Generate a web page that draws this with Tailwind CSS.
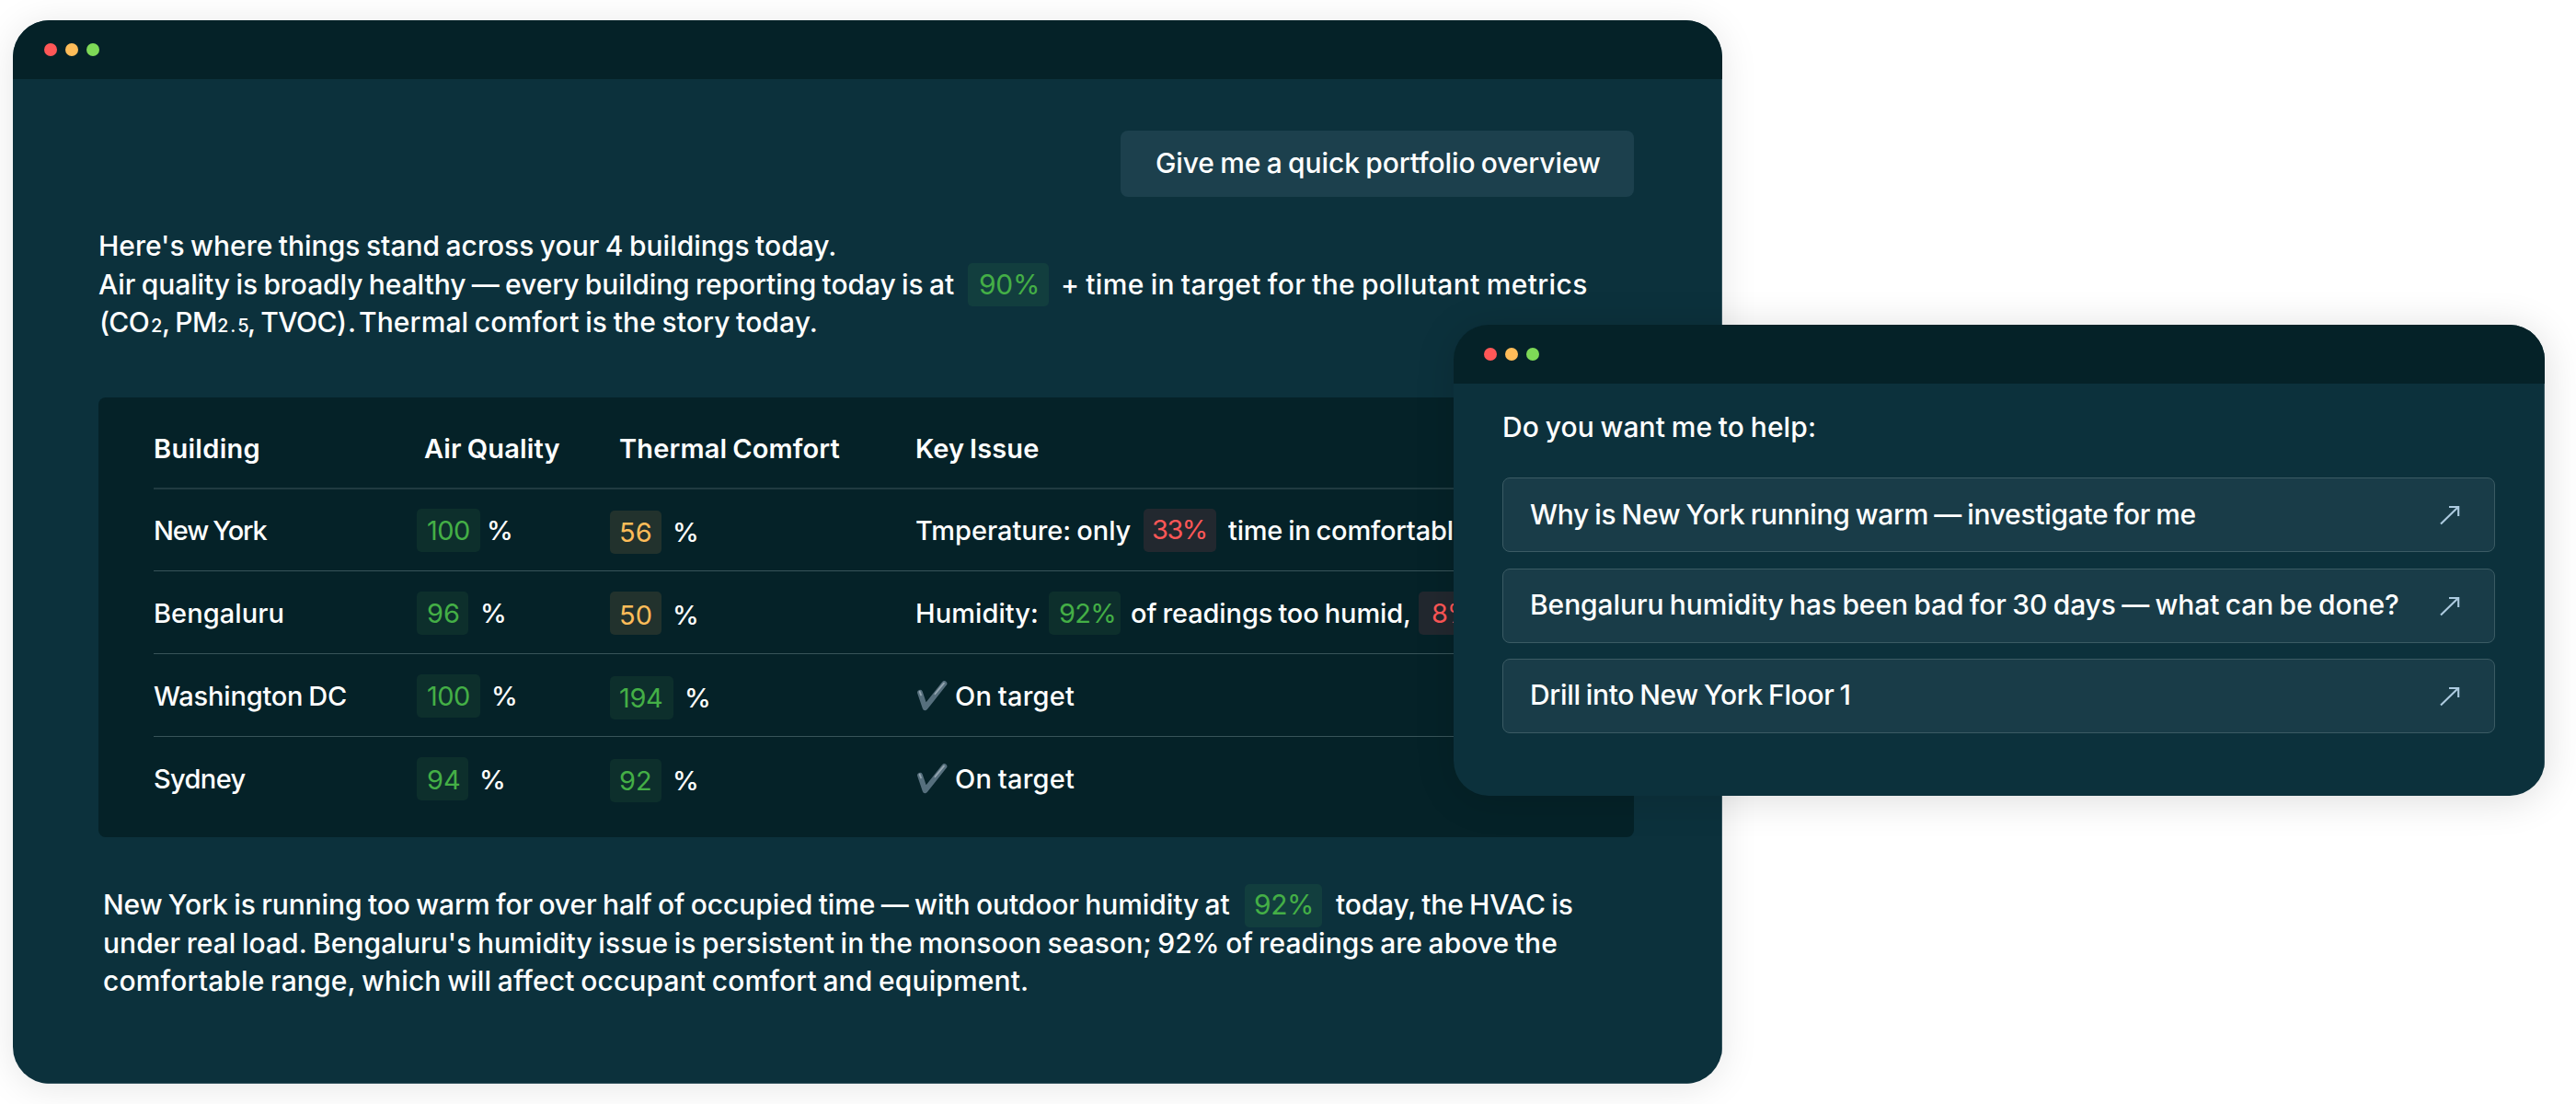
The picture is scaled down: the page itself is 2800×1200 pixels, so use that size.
<!DOCTYPE html>
<html lang="en">
<head>
  <meta charset="UTF-8">
  <title>Portfolio overview</title>
  <script src="https://cdn.jsdelivr.net/npm/@tailwindcss/browser@4"></script>
</head>
<body class="relative w-[2800px] h-[1200px] overflow-hidden bg-white font-['Inter',sans-serif] font-medium text-[30px] text-white whitespace-nowrap [word-spacing:-1.5px]">

  <!-- Chat window -->
  <main class="absolute left-[14px] top-[22px] w-[1858px] h-[1156px] rounded-[40px] overflow-hidden bg-[#0c313c] shadow-[0_4px_40px_rgba(0,0,0,0.1)] flex flex-col">
    <header class="h-16 shrink-0 bg-[#052228] flex items-center gap-[9px] pl-[34px]">
      <span class="size-3.5 rounded-full bg-[#ff5757]"></span>
      <span class="size-3.5 rounded-full bg-[#ffbd59]"></span>
      <span class="size-3.5 rounded-full bg-[#7ed957]"></span>
    </header>

    <div class="flex-1 flex flex-col border-b border-r border-[#35545e]">
      <div class="self-end mt-14 mr-[95px] w-[558px] h-[72px] rounded-lg bg-[#1c404d] flex items-center pl-[38px] pb-[2px] tracking-[-0.1px]">Give me a quick portfolio overview</div>

      <section class="mt-8 pl-[92px]">
        <p class="h-[42px] flex items-center pl-[1px]">Here's where things stand across your 4 buildings today.</p>
        <p class="h-[42px] flex items-center pl-[1px]">
          <span class="w-[945px] tracking-[-0.08px]">Air quality is broadly healthy — every building reporting today is at</span>
          <span class="w-[88px] h-[47px] rounded-[5px] bg-[#123e3e] font-normal text-[#44af46] flex items-center pl-[12px] tracking-[-0.26px]">90%</span>
          <span class="ml-[13px] tracking-[0.37px]">+ time in target for the pollutant metrics</span>
        </p>
        <p class="h-[41px] flex items-baseline pl-[2px] leading-[41px]">
          <span class="w-[56px] tracking-[-0.7px]">(CO</span>
          <span class="w-[12px] text-[20px]">2</span>
          <span class="w-[60px] tracking-[-0.5px] whitespace-pre">, PM</span>
          <span class="w-[33px] text-[20px] tracking-[2px]">2.5</span>
          <span class="w-[109px] tracking-[-0.5px] whitespace-pre">, TVOC)</span>
          <span class="w-[12px]">.</span>
          <span class="tracking-[0.1px]">Thermal comfort is the story today.</span>
        </p>
      </section>

      <!-- Building table -->
      <section class="mt-[61px] ml-[93px] w-[1669px] h-[478px] rounded-lg bg-[#052228] px-[60px] text-[29px]">
        <div class="grid grid-cols-[286px_210px_332px_1fr] items-center h-[100px] pt-[13px] border-b-2 border-[#203b41] font-semibold">
          <span class="tracking-[0.3px]">Building</span>
          <span class="pl-[8px] tracking-[0.15px]">Air Quality</span>
          <span class="pl-[10px] tracking-[0.15px]">Thermal Comfort</span>
          <span class="tracking-[0.1px]">Key Issue</span>
        </div>

        <div class="grid grid-cols-[286px_210px_332px_1fr] items-center h-[89px] border-b border-[#385459]">
          <span class="pt-[1px] tracking-[-1.15px]">New York</span>
          <span class="flex items-center">
            <span class="w-[69px] h-[47px] rounded-[5px] bg-[#0d2f2c] font-normal text-[#44af46] flex items-center pl-[11px] pt-[1px] tracking-[-0.5px]">100</span>
            <span class="ml-[7px] pt-[1px]">%</span>
          </span>
          <span class="flex items-center pt-[5px]">
            <span class="w-[56px] h-[47px] rounded-[5px] bg-[#22322d] font-normal text-[#ffbd59] flex items-center pl-[10px]">56</span>
            <span class="ml-[12px]">%</span>
          </span>
          <span class="flex items-center">
            <span class="w-[248px] pt-[1px] tracking-[-0.03px]">Tmperature: only</span>
            <span class="w-[79px] h-[47px] rounded-[5px] bg-[#22282f] font-normal text-[#ff5757] flex items-center pl-[9px] tracking-[-1.5px]">33%</span>
            <span class="ml-[13px] pt-[1px] tracking-[-0.2px]">time in comfortable range</span>
          </span>
        </div>

        <div class="grid grid-cols-[286px_210px_332px_1fr] items-center h-[90px] pt-[2px] border-b border-[#385459]">
          <span class="tracking-[0.06px]">Bengaluru</span>
          <span class="flex items-center">
            <span class="w-[56px] h-[47px] rounded-[5px] bg-[#0d2f2c] font-normal text-[#44af46] flex items-center pl-[11px]">96</span>
            <span class="ml-[13px]">%</span>
          </span>
          <span class="flex items-center">
            <span class="w-[56px] h-[47px] rounded-[5px] bg-[#22322d] font-normal text-[#ffbd59] flex items-center pl-[10px] pt-[4px]">50</span>
            <span class="ml-[12px] pt-[4px]">%</span>
          </span>
          <span class="flex items-center">
            <span class="w-[145px] tracking-[0.08px]">Humidity:</span>
            <span class="w-[78px] h-[47px] rounded-[5px] bg-[#0d2f2c] font-normal text-[#44af46] flex items-center pl-[11px] tracking-[-0.7px]">92%</span>
            <span class="ml-[11px] w-[313px] tracking-[-0.11px]">of readings too humid,</span>
            <span class="w-[79px] h-[47px] rounded-[5px] bg-[#22282f] font-normal text-[#ff5757] flex items-center pl-[14px] tracking-[-1px]">8%</span>
          </span>
        </div>

        <div class="grid grid-cols-[286px_210px_332px_1fr] items-center h-[90px] pt-[2px] border-b border-[#385459]">
          <span class="tracking-[-0.2px]">Washington DC</span>
          <span class="flex items-center">
            <span class="w-[69px] h-[47px] rounded-[5px] bg-[#0d2f2c] font-normal text-[#44af46] flex items-center pl-[11px] tracking-[-0.5px]">100</span>
            <span class="ml-[12px]">%</span>
          </span>
          <span class="flex items-center pt-[4px]">
            <span class="w-[69px] h-[47px] rounded-[5px] bg-[#0d2f2c] font-normal text-[#44af46] flex items-center pl-[10px] tracking-[-0.4px]">194</span>
            <span class="ml-[12px]">%</span>
          </span>
          <span class="flex items-center pl-[2px]">
            <svg class="w-[33px] h-[33px] mr-[8px]" viewBox="0 0 33 33" fill="none" stroke-linecap="round" stroke-linejoin="round">
              <path d="M3 12.8 8.6 29.3 29.4 3" stroke="#566f7d" stroke-width="5.8"/>
              <path d="M2.6 11.8 4 15.4M19.4 14.2 29 2.6" stroke="#94a5b0" stroke-width="1.8"/>
            </svg>
            <span class="tracking-[0.25px]">On target</span>
          </span>
        </div>

        <div class="grid grid-cols-[286px_210px_332px_1fr] items-center h-[90px]">
          <span class="pt-[1px] tracking-[-0.64px]">Sydney</span>
          <span class="flex items-center">
            <span class="w-[56px] h-[47px] rounded-[5px] bg-[#0d2f2c] font-normal text-[#44af46] flex items-center pl-[11px] pt-[4px]">94</span>
            <span class="ml-[12px] pt-[4px]">%</span>
          </span>
          <span class="flex items-center pt-[5px]">
            <span class="w-[56px] h-[47px] rounded-[5px] bg-[#0d2f2c] font-normal text-[#44af46] flex items-center pl-[10px]">92</span>
            <span class="ml-[12px]">%</span>
          </span>
          <span class="flex items-center pl-[2px] pt-[1px]">
            <svg class="w-[33px] h-[33px] mr-[8px]" viewBox="0 0 33 33" fill="none" stroke-linecap="round" stroke-linejoin="round">
              <path d="M3 12.8 8.6 29.3 29.4 3" stroke="#566f7d" stroke-width="5.8"/>
              <path d="M2.6 11.8 4 15.4M19.4 14.2 29 2.6" stroke="#94a5b0" stroke-width="1.8"/>
            </svg>
            <span class="tracking-[0.25px]">On target</span>
          </span>
        </div>
      </section>

      <section class="mt-[52px] pl-[98px]">
        <p class="h-[42px] flex items-center">
          <span class="w-[1241px] tracking-[-0.08px]">New York is running too warm for over half of occupied time — with outdoor humidity at</span>
          <span class="w-[84px] h-[47px] mt-[3px] pb-[3px] rounded-[5px] bg-[#123e3e] font-normal text-[#44af46] flex items-center pl-[10px] tracking-[-0.4px]">92%</span>
          <span class="ml-[15px] tracking-[-0.17px]">today, the HVAC is</span>
        </p>
        <p class="h-[42px] flex items-center tracking-[0.05px]">under real load. Bengaluru's humidity issue is persistent in the monsoon season; 92% of readings are above the</p>
        <p class="h-[41px] flex items-center tracking-[0.13px]">comfortable range, which will affect occupant comfort and equipment.</p>
      </section>
    </div>
  </main>

  <!-- Follow-up suggestions window -->
  <aside class="absolute left-[1580px] top-[353px] w-[1186px] h-[512px] rounded-[38px] overflow-hidden bg-[#0c313c] shadow-[0_4px_44px_rgba(0,0,0,0.14)] flex flex-col">
    <header class="h-16 shrink-0 bg-[#052228] flex items-center gap-[9px] pl-[33px]">
      <span class="size-3.5 rounded-full bg-[#ff5757]"></span>
      <span class="size-3.5 rounded-full bg-[#ffbd59]"></span>
      <span class="size-3.5 rounded-full bg-[#7ed957]"></span>
    </header>

    <div class="flex-1 border-r border-[#35545e] pt-[29px] pl-[53px] pr-[53px]">
      <p class="h-9 leading-9 tracking-[0.12px]">Do you want me to help:</p>

      <div class="mt-[37px] h-[81px] rounded-lg border border-[#3b5b64] bg-[#193c48] flex items-center justify-between pl-[29px] pr-[37px]">
        <span class="tracking-[-0.3px]">Why is New York running warm — investigate for me</span>
        <svg class="w-[22px] h-[22px]" viewBox="0 0 22 22" fill="none" stroke="#adcbe0" stroke-width="2.1">
          <path d="M1 20.5 20 2M10 2h10.2v10"/>
        </svg>
      </div>
      <div class="mt-[18px] h-[81px] rounded-lg border border-[#3b5b64] bg-[#193c48] flex items-center justify-between pl-[29px] pr-[37px]">
        <span class="tracking-[-0.09px] pb-[3px]">Bengaluru humidity has been bad for 30 days — what can be done?</span>
        <svg class="w-[22px] h-[22px]" viewBox="0 0 22 22" fill="none" stroke="#adcbe0" stroke-width="2.1">
          <path d="M1 20.5 20 2M10 2h10.2v10"/>
        </svg>
      </div>
      <div class="mt-[17px] h-[81px] rounded-lg border border-[#3b5b64] bg-[#193c48] flex items-center justify-between pl-[29px] pr-[37px]">
        <span class="tracking-[-0.34px] pb-[3px]">Drill into New York Floor 1</span>
        <svg class="w-[22px] h-[22px]" viewBox="0 0 22 22" fill="none" stroke="#adcbe0" stroke-width="2.1">
          <path d="M1 20.5 20 2M10 2h10.2v10"/>
        </svg>
      </div>
    </div>
  </aside>

</body>
</html>
